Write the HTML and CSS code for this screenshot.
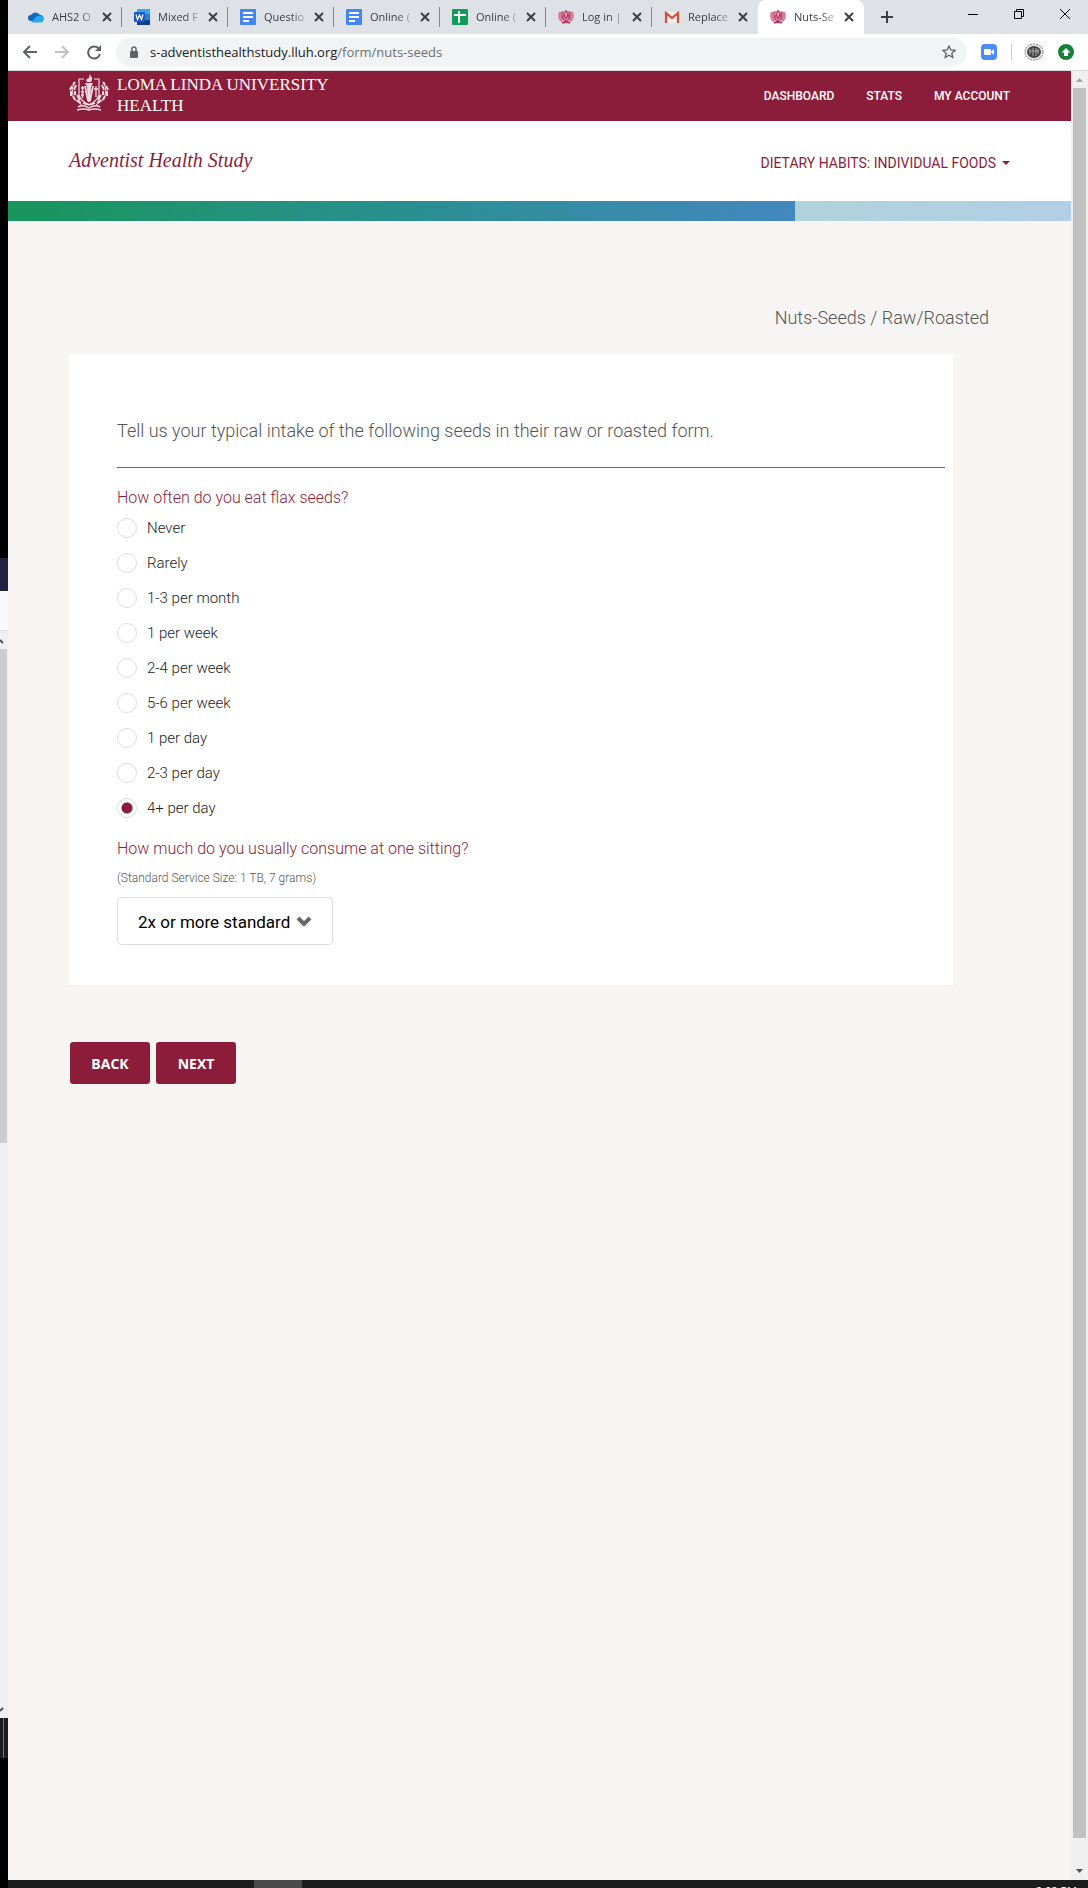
FILE: index.html
```html
<!DOCTYPE html>
<html lang="en">
<head>
<meta charset="utf-8">
<meta name="viewport" content="width=device-width, initial-scale=1">
<title>Nuts-Seeds</title>
<link rel="stylesheet" href="styles.css">
</head>
<body>
<svg class="defs" aria-hidden="true">
  <symbol id="x" viewBox="0 0 10 10"><path d="M1 1l8 8M9 1l-8 8" stroke="#3c4043" stroke-width="2"/></symbol>
  <symbol id="doc" viewBox="0 0 16 16"><rect width="16" height="16" rx="1" fill="#4285f4"/><path d="M3 4h10M3 8h10M3 12h6" stroke="#fff" stroke-width="2"/></symbol>
  <symbol id="sheet" viewBox="0 0 16 16"><rect width="16" height="16" rx="1" fill="#0f9d58"/><path d="M2 6h12M7 2v12" stroke="#fff" stroke-width="2"/></symbol>
  <symbol id="mini-crest" viewBox="0 0 16 16">
    <path d="M2.500 3Q0 9 4.500 12M13.500 3Q16 9 11.500 12" fill="none" stroke="#d4809c" stroke-width="3"/>
    <path d="M4 3h8v5q-1 3-4 4-3-1-4-4z" fill="#f0c4d2" stroke="#b8325e" stroke-width="1.200"/>
    <path d="M6 4l1.500 6M10 4L8.500 10M8 1v3M5 6v3M11 5v4" stroke="#b8325e" stroke-width="1.400"/>
    <path d="M4 14q4-2 8 0" fill="none" stroke="#b8325e" stroke-width="1.800"/>
  </symbol>
  <symbol id="crest" viewBox="0 0 40 38">
    <g fill="none" stroke="currentColor">
      <path d="M5 8Q-1 24 13 31M35 8Q41 24 27 31" stroke-width="1"/>
      <path d="M6 8l-2 3M3 12l-2 4M2 17l0 5M4 22l2 4M8 26l4 3M7 11l-2 5M6 17l0 4M8 21l3 5M34 8l2 3M37 12l2 4M38 17l0 5M36 22l-2 4M32 26l-4 3M33 11l2 5M34 17l0 4M32 21l-3 5" stroke-width="2"/>
      <path d="M15 5h-5v16q2 6 10 10q8-4 10-10V5h-5" stroke-width="1.200"/>
      <path d="M12 14h3M13.500 12v12M12 18h3M12 21h3M27 12v11M25 15h4" stroke-width="1.300"/>
      <path d="M16 12l3 15M24 12l-3 15" stroke-width="1.800"/>
      <path d="M9 33q5-3 11 1q6-4 11-1M8 36q7-2 12 0q5-2 12 0M14 29q6 3 12 0" stroke-width="1.500"/>
    </g>
    <path d="M16 9h8l-2 4-1 15h-2l-1-15zM18 8q-2-3 2-4q1-2 0-4q5 4 2 8z" fill="currentColor"/>
  </symbol>
</svg>
<div class="desktop">
  <div class="behind" aria-hidden="true">
    <div class="behind-black"></div>
    <div class="behind-navy"></div>
    <div class="behind-white"></div>
    <div class="behind-scroll">
      <svg width="8" height="18"><path d="M0 9l3 3" stroke="#505050" stroke-width="2"/></svg>
      <div class="behind-thumb"></div>
      <svg class="behind-down" width="8" height="17"><path d="M0 10l3-3" stroke="#505050" stroke-width="2"/></svg>
    </div>
    <div class="behind-bar"></div>
    <div class="behind-end"></div>
  </div>
  <div class="window">
    <div class="tabs">
      <div class="tab"><svg class="fav" viewBox="0 0 16 16"><path d="M3 12a3 3 0 0 1 0-6a5 4.500 0 0 1 9 0a3 3 0 0 1 1 6z" fill="#0f6cbd"/><path d="M3 13.500L8 8q3-2 5-1a3.300 3.300 0 0 1 0 6.500z" fill="#28a8ea"/></svg><span class="tab-title">AHS2 O</span><button class="tab-x" aria-label="Close tab"><svg><use href="#x"/></svg></button></div>
      <div class="tab"><svg class="fav" viewBox="0 0 16 16"><rect x="3" width="13" height="16" rx="1" fill="#2b7cd3"/><path d="M3 0h13v5H3z" fill="#41a5ee"/><path d="M3 11h13v5H3z" fill="#103f91"/><rect y="3" width="11" height="10" rx="1" fill="#185abd"/><path d="M2 5.500l1.500 5L5.500 6l2 4.500L9 5.500" fill="none" stroke="#fff" stroke-width="1.200"/></svg><span class="tab-title">Mixed F</span><button class="tab-x" aria-label="Close tab"><svg><use href="#x"/></svg></button></div>
      <div class="tab"><svg class="fav"><use href="#doc"/></svg><span class="tab-title">Questio</span><button class="tab-x" aria-label="Close tab"><svg><use href="#x"/></svg></button></div>
      <div class="tab"><svg class="fav"><use href="#doc"/></svg><span class="tab-title">Online (</span><button class="tab-x" aria-label="Close tab"><svg><use href="#x"/></svg></button></div>
      <div class="tab"><svg class="fav"><use href="#sheet"/></svg><span class="tab-title">Online (</span><button class="tab-x" aria-label="Close tab"><svg><use href="#x"/></svg></button></div>
      <div class="tab"><svg class="fav"><use href="#mini-crest"/></svg><span class="tab-title">Log in |</span><button class="tab-x" aria-label="Close tab"><svg><use href="#x"/></svg></button></div>
      <div class="tab tab-before"><svg class="fav" viewBox="0 0 16 16"><path d="M1 3h14v11H1z" fill="#eee"/><path d="M2 14V4l6 5 6-5v10" fill="none" stroke="#d54b3d" stroke-width="2.200"/></svg><span class="tab-title">Replace</span><button class="tab-x" aria-label="Close tab"><svg><use href="#x"/></svg></button></div>
      <div class="tab tab-active"><svg class="fav"><use href="#mini-crest"/></svg><span class="tab-title">Nuts-Se</span><button class="tab-x" aria-label="Close tab"><svg><use href="#x"/></svg></button></div>
      <button class="new-tab" aria-label="New tab"><svg width="12" height="12"><path d="M6 0v12M0 6h12" stroke="#3c4043" stroke-width="2"/></svg></button>
      <div class="win-buttons">
        <button aria-label="Minimize"><svg width="10" height="10"><path d="M0 5.500h10" stroke="#000"/></svg></button>
        <button aria-label="Restore"><svg width="10" height="10"><path d="M.5 2.500h7v7h-7zM2.500 2.500v-2h7v7h-2" fill="none" stroke="#000"/></svg></button>
        <button aria-label="Close"><svg width="10" height="10"><path d="M0 0l10 10M10 0L0 10" stroke="#000"/></svg></button>
      </div>
    </div>
    <div class="toolbar">
      <button aria-label="Back"><svg width="16" height="16" fill="none" stroke="#5f6368" stroke-width="2"><path d="M15 8H2M8 2L2 8l6 6"/></svg></button>
      <button aria-label="Forward"><svg width="16" height="16" fill="none" stroke="#bdc1c6" stroke-width="2"><path d="M1 8h13M8 2l6 6-6 6"/></svg></button>
      <button aria-label="Reload"><svg width="16" height="16"><path d="M13 5a6 6 0 1 0 1 5" fill="none" stroke="#5f6368" stroke-width="2"/><path d="M15 1v6H9z" fill="#5f6368"/></svg></button>
      <div class="omnibox">
        <svg width="10" height="13"><rect x="1" y="5" width="8" height="7" rx="1" fill="#5f6368"/><path d="M3 6V3a2 2 0 0 1 4 0v3" fill="none" stroke="#5f6368" stroke-width="1.500"/></svg>
        <div class="url">s-adventisthealthstudy.lluh.org<span>/form/nuts-seeds</span></div>
        <svg class="star" width="14" height="14" viewBox="0 0 14 14"><path d="M7 1l1.800 4 4.200.4-3.200 2.800 1 4.300L7 10.200l-3.800 2.300 1-4.300L1 5.400 5.200 5z" fill="none" stroke="#5f6368" stroke-width="1.300"/></svg>
      </div>
      <svg class="ext" width="16" height="16"><rect width="16" height="16" rx="4" fill="#4a8cff"/><path d="M3 5h6a1 1 0 0 1 1 1v5H4a1 1 0 0 1-1-1zM10.500 7L13 5v6l-2.500-2z" fill="#fff"/></svg>
      <span class="rule"></span>
      <svg class="avatar" width="20" height="20"><ellipse cx="10" cy="10" rx="9" ry="8" fill="#e8e8e8" stroke="#777" stroke-dasharray="2 1"/><ellipse cx="10" cy="10" rx="7" ry="6" fill="#444"/><path d="M6 7v5M9 6v8M12 6v8M14 7v5M5 9h10" stroke="#aaa"/></svg>
      <svg class="update" width="16" height="16"><circle cx="8" cy="8" r="8" fill="#188038"/><path d="M8 4l4.500 4.500H10V12H6V8.500H3.500z" fill="#fff"/></svg>
    </div>
    <div class="viewport">
      <div class="page">
        <header class="brand-bar">
          <a class="brand" href="#"><svg class="crest" viewBox="0 0 40 38"><use href="#crest"/></svg><span>LOMA LINDA UNIVERSITY<br>HEALTH</span></a>
          <nav class="main-nav"><a href="#">DASHBOARD</a><a href="#">STATS</a><a href="#">MY ACCOUNT</a></nav>
        </header>
        <div class="study-bar">
          <a class="study" href="#">Adventist Health Study</a>
          <button class="section-menu">DIETARY HABITS: INDIVIDUAL FOODS <svg width="8" height="4"><path d="M0 0h8L4 4z" fill="#8c1d3a"/></svg></button>
        </div>
        <div class="progress"><div class="progress-done" style="width:74%"></div></div>
        <main class="content">
          <p class="crumb">Nuts-Seeds / Raw/Roasted</p>
          <form>
            <div class="card">
              <p class="intro">Tell us your typical intake of the following seeds in their raw or roasted form.</p>
              <fieldset>
                <legend class="question">How often do you eat flax seeds?</legend>
                <div class="choices">
                  <label><input type="radio" name="often">Never</label>
                  <label><input type="radio" name="often">Rarely</label>
                  <label><input type="radio" name="often">1-3 per month</label>
                  <label><input type="radio" name="often">1 per week</label>
                  <label><input type="radio" name="often">2-4 per week</label>
                  <label><input type="radio" name="often">5-6 per week</label>
                  <label><input type="radio" name="often">1 per day</label>
                  <label><input type="radio" name="often">2-3 per day</label>
                  <label><input type="radio" name="often" checked>4+ per day</label>
                </div>
              </fieldset>
              <label class="question amount-label" for="amount">How much do you usually consume at one sitting?</label>
              <p class="hint">(Standard Service Size: 1 TB, 7 grams)</p>
              <div class="select">
                <select id="amount"><option>2x or more standard</option></select>
                <svg width="16" height="11" viewBox="0 0 16 11"><path d="M2 2l6 6 6-6" fill="none" stroke="#666" stroke-width="4"/></svg>
              </div>
            </div>
            <div class="actions"><button type="button">BACK</button><button type="button">NEXT</button></div>
          </form>
        </main>
      </div>
      <div class="scrollbar" aria-hidden="true">
        <svg width="17" height="17"><path d="M5 11h7L8.500 7z" fill="#a3a3a3"/></svg>
        <div class="thumb"></div>
        <svg width="17" height="17"><path d="M5 6h7l-3.500 4z" fill="#505050"/></svg>
      </div>
    </div>
  </div>
  <div class="taskbar"><div class="task"></div><span class="clock">2:02 PM</span></div>
</div>
</body>
</html>
```
FILE: styles.css
```css
* { box-sizing: border-box; }
body { margin: 0; font-family: Roboto, "Liberation Sans", sans-serif; color: #222; }
p, fieldset { margin: 0; padding: 0; border: 0; }
button { margin: 0; padding: 0; border: 0; background: none; font: inherit; color: inherit; }
a { color: inherit; text-decoration: none; }
svg { display: block; flex: none; }
.defs { position: absolute; width: 0; height: 0; }

.desktop { display: grid; grid-template: 1fr 8px / 8px minmax(0, 1fr); min-height: 100vh; background: #000; }

/* sliver of the windows underneath */
.behind { display: flex; flex-direction: column; grid-row: 1 / 3; overflow: hidden; }
.behind-black { height: 558px; }
.behind-navy { height: 33px; background: #1f2340; }
.behind-white { height: 40px; background: #f9f9f9; border-bottom: 1px solid #ddd; }
.behind-scroll { display: flex; flex-direction: column; flex: 1; background: #f0f0f0; }
.behind-thumb { width: 7px; height: 494px; background: #cdcdcd; }
.behind-down { margin-top: auto; }
.behind-bar { height: 40px; background: linear-gradient(90deg, #1c1c1c 3px, #777 3px 4px, #1c1c1c 4px); }
.behind-end { height: 130px; }

.window { display: flex; flex-direction: column; min-width: 0; background: #fff; }

.tabs { display: flex; height: 34px; padding-left: 8px; background: #dee1e6; font: 11px/34px "Open Sans", sans-serif; color: #3c4043; }
.tab { display: flex; align-items: center; gap: 8px; flex: 0 1 106px; min-width: 0; padding-left: 12px; background: linear-gradient(#85888c, #85888c) right center / 1px 20px no-repeat; }
.tab-before { background: none; }
.tab-active { background: #fff; border-radius: 8px 8px 0 0; }
.fav { width: 16px; height: 16px; }
.tab-title { flex: 0 0 42px; white-space: nowrap; mask-image: linear-gradient(90deg, #000 65%, rgba(0, 0, 0, 0.2)); }
.tab-x svg { width: 10px; height: 10px; }
.new-tab { width: 44px; padding-left: 17px; }
.win-buttons { display: flex; margin-left: auto; height: 28px; }
.win-buttons button { display: grid; place-items: center; width: 46px; }

.toolbar { display: flex; align-items: center; height: 37px; padding: 0 14px; border-bottom: 1px solid #d5d7da; }
.toolbar button { width: 32px; }
.omnibox { display: flex; align-items: center; gap: 11px; flex: 1; min-width: 0; height: 28px; margin: 0 14px 0 -2px; padding: 0 11px 0 13px; border-radius: 14px; background: #f1f3f4; font: 13px/28px "Open Sans", sans-serif; color: #202124; }
.url { flex: 1; min-width: 0; overflow: hidden; white-space: nowrap; }
.url span { color: #6b6f73; }
.rule { width: 1px; height: 16px; margin: 0 12px 0 14px; background: #c8cacd; }
.update { margin-left: 14px; }

.viewport { display: flex; flex: 1; }
.page { flex: 1; min-width: 0; background: #f6f5f3; }
.scrollbar { display: flex; flex-direction: column; width: 17px; background: #f0f0f0; }
.thumb { flex: 1; margin: 0 2px 25px; background: #c1c1c1; }

.brand-bar { display: flex; justify-content: space-between; height: 50px; padding: 0 61px; background: #8c1d3a; color: #fff; }
.brand { display: flex; gap: 8px; padding-top: 3px; font: 17px/21px "Liberation Serif", serif; white-space: nowrap; }
.crest { width: 40px; height: 38px; color: #f0dce1; }
.main-nav { display: flex; align-items: center; gap: 32px; font: 500 12px Roboto, sans-serif; white-space: nowrap; }
.study-bar { display: flex; align-items: center; justify-content: space-between; height: 80px; padding: 0 61px; background: #fff; color: #8c1d3a; }
.study { padding-bottom: 2px; font: italic 20px/28px "Liberation Serif", serif; }
.section-menu { display: flex; align-items: center; gap: 6px; padding-top: 4px; font: 14px/20px Roboto, sans-serif; white-space: nowrap; }
.progress { height: 20px; background: linear-gradient(90deg, #b0d3da 74%, #b2cee6); }
.progress-done { height: 20px; background: linear-gradient(90deg, #18965c, #2a8f90 50%, #4388bf); }

.content { padding: 82px 118px 40px 61px; font-weight: 300; }
.crumb { margin-right: -36px; font-size: 18px; line-height: 30px; text-align: right; color: #555; }
.card { margin-top: 21px; padding: 60px 8px 40px 48px; background: #fff; }
.intro { padding-bottom: 19px; border-bottom: 1px solid #666; font-size: 18px; line-height: 34px; color: #555; }
.question { display: block; padding: 0; font-size: 16px; line-height: 30px; color: #8c1d3a; }
fieldset { margin-top: 15px; }
.choices { display: grid; gap: 15px; padding-top: 5px; }
.choices label { display: flex; align-items: center; gap: 10px; font-size: 15px; line-height: 20px; }
.choices input { appearance: none; width: 20px; height: 20px; margin: 0; border: 1px solid #ddd; border-radius: 50%; background: #fff; }
.choices input:checked { background: radial-gradient(#8c1d3a 5px, #fff 6px); }
.amount-label { margin-top: 16px; }
.hint { margin-top: 4px; font-size: 12px; line-height: 20px; color: #555; }
.select { position: relative; width: 216px; margin-top: 9px; }
.select select { appearance: none; display: block; width: 100%; height: 48px; padding: 2px 20px 0; border: 1px solid #ddd; border-radius: 4px; background: #fff; font: 17px Roboto, sans-serif; color: #000; }
.select svg { position: absolute; right: 21px; top: 19px; pointer-events: none; }
.actions { display: flex; gap: 6px; margin-top: 57px; padding-left: 1px; }
.actions button { width: 80px; height: 42px; border-radius: 3px; background: #8c1d3a; font: 700 14px "Open Sans", sans-serif; color: #fff; }

.taskbar { display: flex; height: 8px; overflow: hidden; background: #1c1c1c; }
.task { width: 48px; margin-left: 246px; background: #4a4a4a; }
.clock { margin: 3px 11px 0 auto; font: 11px/16px "Open Sans", sans-serif; color: #fff; }
```
